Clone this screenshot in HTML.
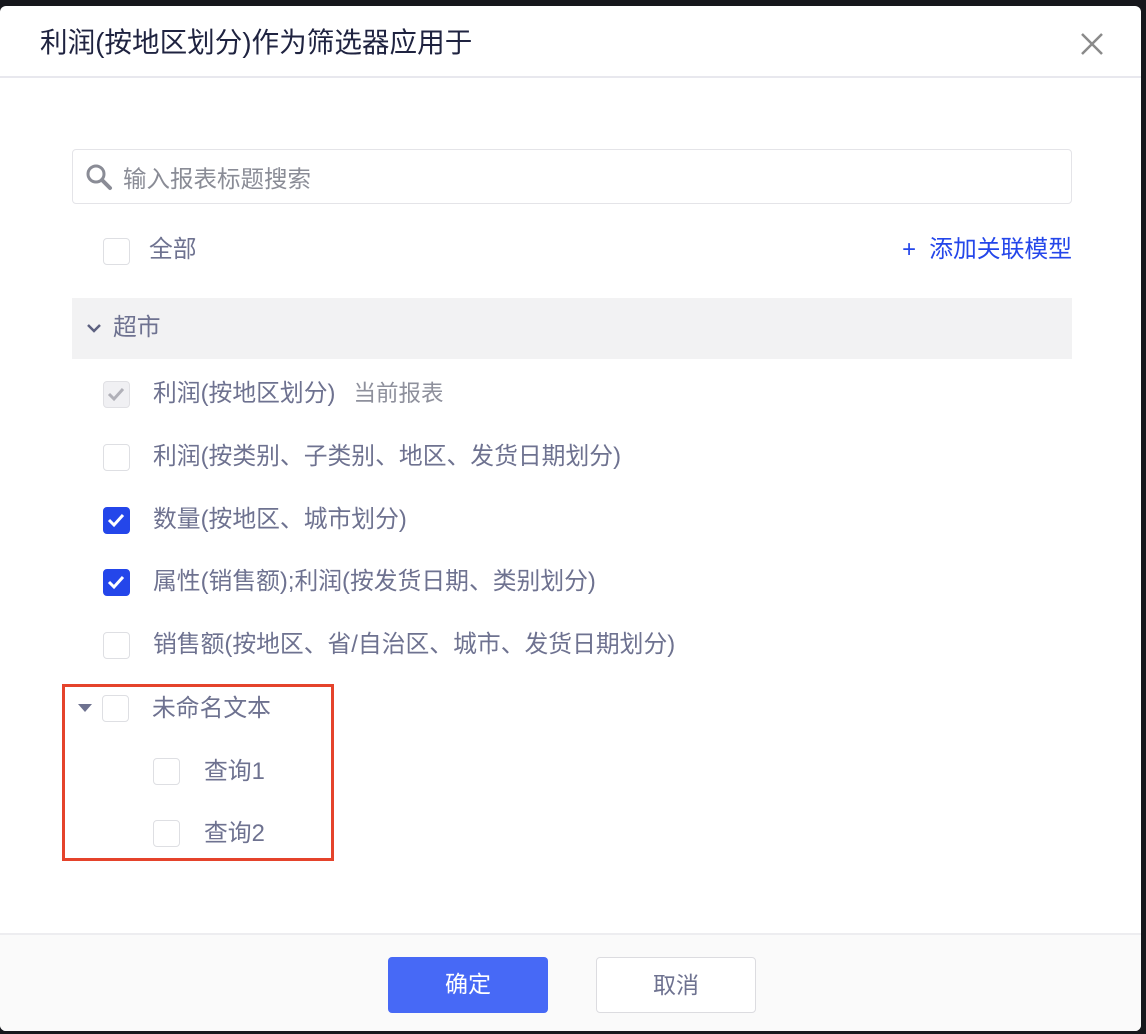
<!DOCTYPE html>
<html><head><meta charset="utf-8"><style>
*{box-sizing:border-box;margin:0;padding:0}
body{width:1146px;height:1034px;background:#16171c;position:relative;overflow:hidden;font-family:"Liberation Sans","Noto Sans CJK SC",sans-serif}
.dlg{position:absolute;left:0;top:6px;width:1141px;height:1025px;background:#fff;border-radius:6px;overflow:hidden}
.title{position:absolute;left:40px;top:18px;font-size:27.6px;color:#1f2340;line-height:38px;white-space:nowrap}
.close{position:absolute;left:1080px;top:26px}
.hl{position:absolute;left:0;top:70px;width:100%;height:2px;background:#e8e8ee}
.search{position:absolute;left:72px;top:143px;width:1000px;height:55px;border:1.5px solid #e4e4e8;border-radius:4px}
.search span{position:absolute;left:50px;top:10px;font-size:23.5px;color:#8a8c96;white-space:nowrap}
.abs{position:absolute}
.cb{position:absolute;width:27px;height:27px;border:1.5px solid #dedfe3;border-radius:4px;background:#fff}
.cb.on{background:#2446ea;border-color:#2446ea}
.cb.dis{background:#f0f0f3;border-color:#e0e0e4}
.t{position:absolute;font-size:23.8px;color:#6e7290;line-height:30px;white-space:nowrap}
.grp{position:absolute;left:72px;top:292px;width:1000px;height:61px;background:#f2f2f3}
.red{position:absolute;left:62px;top:678px;width:272px;height:177px;border:3px solid #e5432b}
.foot{position:absolute;left:0;top:927px;width:100%;height:98px;background:#fafafa;border-top:2px solid #ededf0}
.btn{position:absolute;top:22px;width:160px;height:56px;border-radius:4px;font-size:23px;text-align:center;line-height:54px}
</style></head><body>
<div class="dlg">
<div class="title">利润(按地区划分)作为筛选器应用于</div>
<svg class="close" width="24" height="24" viewBox="0 0 24 24"><path d="M2 2L22 22M22 2L2 22" stroke="#8a8a8a" stroke-width="2.5"/></svg>
<div class="hl"></div>
<div class="search"><svg class="abs" style="left:12px;top:13px" width="28" height="28" viewBox="0 0 28 28"><circle cx="11" cy="11" r="8" fill="none" stroke="#8a8c96" stroke-width="3"/><path d="M17 17L25 25" stroke="#8a8c96" stroke-width="4" stroke-linecap="round"/></svg><span>输入报表标题搜索</span></div>
<div class="cb" style="left:103px;top:232px"></div><div class="t" style="left:149px;top:229px">全部</div>
<div class="t" style="right:69px;top:229px;color:#2446ea">+&nbsp; 添加关联模型</div>
<div class="grp"><svg class="abs" style="left:14px;top:24px" width="16" height="12" viewBox="0 0 16 12"><path d="M2 3L8 9L14 3" fill="none" stroke="#5d6180" stroke-width="2.5"/></svg><div class="t" style="left:41px;top:15px">超市</div></div>

<div class="cb dis" style="left:103px;top:375px"><svg width="24" height="24" viewBox="0 0 24 24"><path d="M5 12L10 17L19 7" fill="none" stroke="#b0b0b8" stroke-width="3"/></svg></div>
<div class="t" style="left:153px;top:373px">利润(按地区划分)<span style="margin-left:18px;font-size:22.5px;color:#8e909c">当前报表</span></div>

<div class="cb" style="left:103px;top:438px"></div><div class="t" style="left:153px;top:436px">利润(按类别、子类别、地区、发货日期划分)</div>

<div class="cb on" style="left:103px;top:501px"><svg width="24" height="24" viewBox="0 0 24 24"><path d="M5 12L10 17L19 7" fill="none" stroke="#fff" stroke-width="3"/></svg></div>
<div class="t" style="left:153px;top:499px">数量(按地区、城市划分)</div>

<div class="cb on" style="left:103px;top:563px"><svg width="24" height="24" viewBox="0 0 24 24"><path d="M5 12L10 17L19 7" fill="none" stroke="#fff" stroke-width="3"/></svg></div>
<div class="t" style="left:153px;top:561px">属性(销售额);利润(按发货日期、类别划分)</div>

<div class="cb" style="left:103px;top:626px"></div><div class="t" style="left:153px;top:624px">销售额(按地区、省/自治区、城市、发货日期划分)</div>

<svg class="abs" style="left:77px;top:697px" width="16" height="10" viewBox="0 0 16 10"><path d="M1 1H15L8 9Z" fill="#6e7290"/></svg>
<div class="cb" style="left:102px;top:689px"></div><div class="t" style="left:152px;top:688px">未命名文本</div>
<div class="cb" style="left:153px;top:752px"></div><div class="t" style="left:204px;top:751px">查询1</div>
<div class="cb" style="left:153px;top:814px"></div><div class="t" style="left:204px;top:813px">查询2</div>
<div class="red"></div>

<div class="foot">
<div class="btn" style="left:388px;background:#4769f6;color:#fff">确定</div>
<div class="btn" style="left:596px;background:#fff;border:1.5px solid #dcdce0;color:#6e7290">取消</div>
</div>
</div>
</body></html>
